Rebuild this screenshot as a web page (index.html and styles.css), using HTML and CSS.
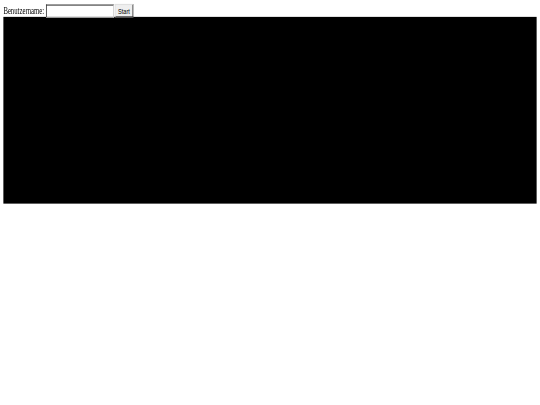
FILE: index.html
```html
<!DOCTYPE html>
<html>
<head>
<meta charset="utf-8">
<link rel="stylesheet" href="styles.css">
</head>
<body>
<div class="frame">
  <div class="page">
    <div class="controls">
      <label class="label" for="user">Benutzername:</label>
      <input class="field" id="user" type="text">
      <button class="btn" type="button">Start</button>
    </div>
    <div class="canvas"></div>
  </div>
</div>
</body>
</html>
```
FILE: styles.css
```css
html, body {
  margin: 0;
  padding: 0;
  overflow: hidden;
  background: #fff;
}
.frame {
  width: 540px;
  height: 405px;
  overflow: hidden;
}
.page {
  width: 1280px;
  height: 720px;
  padding: 8px;
  box-sizing: border-box;
  transform: scale(0.421875, 0.5625);
  transform-origin: 0 0;
  font-family: "Liberation Serif", serif;
  font-size: 16px;
  color: #000;
}
.controls {
  display: flex;
  align-items: center;
  height: 22px;
}
.label {
  margin-right: 4px;
  display: inline-block;
  transform: scaleY(1.2);
}
.field {
  width: 153px;
  height: 17px;
  border: 2px inset #767676;
  border-color: #8f8f8f #cfcfcf #cfcfcf #8f8f8f;
  padding: 1px 2px;
  margin: 0 2px 0 0;
  font-size: 13px;
}
.btn {
  height: 24px;
  padding: 1px 6px;
  font-family: "Liberation Sans", sans-serif;
  font-size: 13.33px;
  background: #efefef;
  border: 2px outset #cfcfcf;
  border-color: #e0e0e0 #8a8a8a #8a8a8a #e0e0e0;
  color: #000;
}
.canvas {
  width: 1264px;
  height: 332px;
  background: #000;
}
```
